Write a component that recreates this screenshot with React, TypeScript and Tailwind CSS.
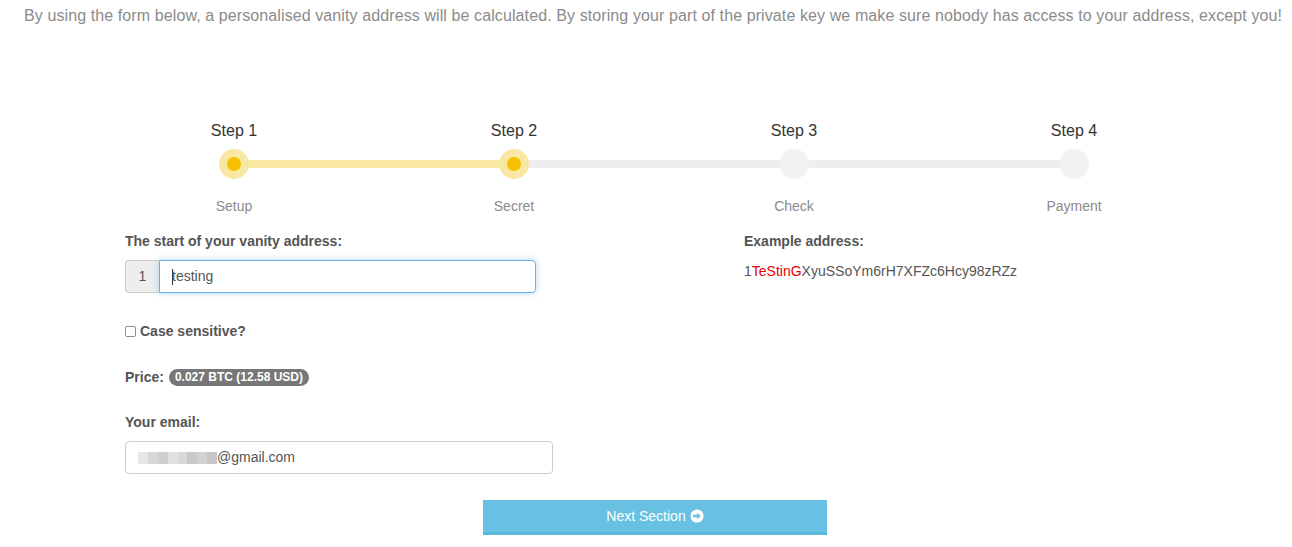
const steps = [
  { title: "Step 1", label: "Setup", done: true },
  { title: "Step 2", label: "Secret", done: true },
  { title: "Step 3", label: "Check", done: false },
  { title: "Step 4", label: "Payment", done: false },
];

const blurBlocks = ["#e6e6e6", "#d6d6d6", "#cfcfcf", "#e2e2e2", "#d9d9d9", "#c9c9c9", "#d2d2d2", "#c6c6c6"];

function ArrowCircle() {
  return (
    <svg viewBox="0 0 16 16" className="h-[14px] w-[14px]">
      <circle cx="8" cy="8" r="7.5" fill="#fff" />
      <path d="M3.6 6.7h4.6V4.2L12.3 8l-4.1 3.8V9.3H3.6z" fill="#68c1e2" />
    </svg>
  );
}

export default function App() {
  return (
    <div className="min-h-[547px] bg-white font-['Liberation_Sans',Arial,sans-serif] text-[#333]">
      {/* Intro */}
      <p className="pt-[5px] pl-[24px] text-[16px] leading-[22px] tracking-[0.1px] text-[#8b8b8b] whitespace-nowrap">
        By using the form below, a personalised vanity address will be calculated. By storing your part of the private key we make sure nobody has access to your address, except you!
      </p>

      {/* Wizard */}
      <div className="relative mt-[94px] ml-[94px] grid w-[1120px] grid-cols-4">
        <div className="absolute left-[140px] top-[39px] h-[8px] w-[840px] bg-[#eeeeee]" />
        <div className="absolute left-[140px] top-[39px] h-[8px] w-[280px] bg-[#f9e8a3]" />
        {steps.map((s) => (
          <div key={s.title} className="relative flex flex-col items-center">
            <span className="text-[16px] leading-[20px] text-[#333]">{s.title}</span>
            <div
              className={`mt-[8px] flex h-[30px] w-[30px] items-center justify-center rounded-full ${
                s.done ? "bg-[#f9e8a3]" : "bg-[#f2f2f2]"
              }`}
            >
              {s.done && <div className="h-[14px] w-[14px] rounded-full bg-[#f6bf00]" />}
            </div>
            <span className="mt-[17px] text-[14px] leading-[20px] text-[#8b8b8b]">{s.label}</span>
          </div>
        ))}
      </div>

      {/* Form */}
      <div className="mt-[16px] ml-[125px] flex">
        <div className="flex w-[619px] flex-col">
          <label className="text-[14px] font-bold leading-[18px] text-[#555]">
            The start of your vanity address:
          </label>
          <div className="mt-[10px] flex h-[33px] w-[411px]">
            <div className="flex w-[34px] items-center justify-center rounded-l-[4px] border border-r-0 border-[#ccc] bg-[#eee] text-[14px] text-[#555]">
              1
            </div>
            <div className="flex flex-1 items-center rounded-r-[4px] border border-[#66afe9] px-[12px] text-[14px] text-[#555] shadow-[0_0_6px_rgba(102,175,233,0.5)]">
              <span className="mr-[-1px] h-[16px] w-px bg-[#333]" />
              testing
            </div>
          </div>

          <label className="mt-[29px] flex h-[18px] items-center gap-[4px] text-[14px] font-bold text-[#555]">
            <span className="h-[11px] w-[11px] rounded-[2px] border border-[#8e8e8e] bg-white" />
            Case sensitive?
          </label>

          <div className="mt-[28px] flex h-[18px] items-center gap-[5px] text-[14px] font-bold text-[#555]">
            Price:
            <span className="rounded-full bg-[#777] px-[6px] text-[12px] leading-[17px] text-white">
              0.027 BTC (12.58 USD)
            </span>
          </div>

          <label className="mt-[27px] text-[14px] font-bold leading-[18px] text-[#555]">Your email:</label>
          <div className="mt-[10px] flex h-[33px] w-[428px] items-center rounded-[4px] border border-[#ccc] px-[12px] text-[14px] text-[#555]">
            <span className="flex h-[12px] w-[79px]">
              {blurBlocks.map((c, i) => (
                <span key={i} className="h-full flex-1" style={{ backgroundColor: c }} />
              ))}
            </span>
            @gmail.com
          </div>
        </div>

        <div className="flex flex-col">
          <span className="text-[14px] font-bold leading-[18px] text-[#555]">Example address:</span>
          <span className="mt-[12px] text-[14px] leading-[18px] text-[#555]">
            1<span className="text-[#e60000]">TeStinG</span>XyuSSoYm6rH7XFZc6Hcy98zRZz
          </span>
        </div>
      </div>

      <button className="mt-[26px] ml-[483px] flex h-[35px] w-[344px] items-center justify-center gap-[4px] border-b-[3px] border-[#5bb9dc] bg-[#68c1e2] text-[14px] text-white">
        Next Section <ArrowCircle />
      </button>
    </div>
  );
}
